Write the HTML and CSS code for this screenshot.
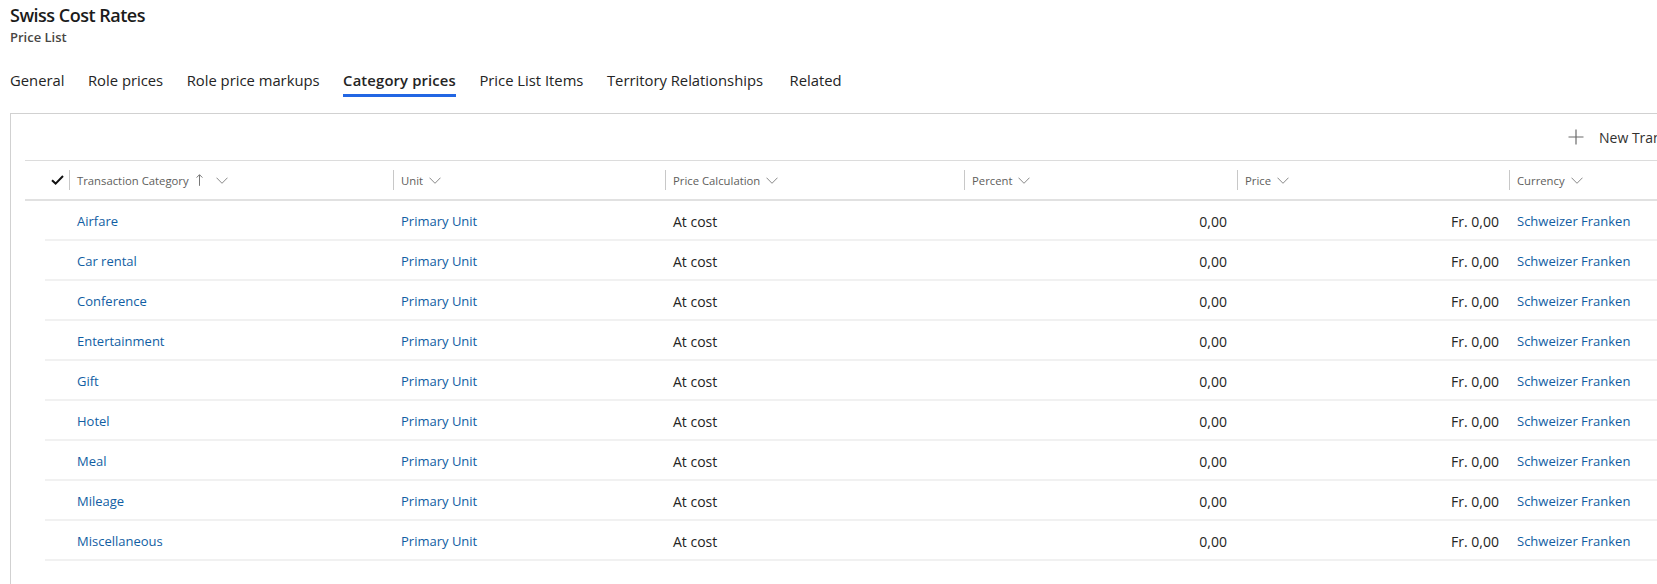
FILE: index.html
```html
<!DOCTYPE html>
<html lang="en">
<head>
    <meta charset="UTF-8">
    <title>Swiss Cost Rates - Price List</title>
    <link rel="stylesheet" href="styles.css">
</head>
<body>

    <!-- Cabecera del registro -->
    <div class="record-header">
        <div class="record-title">Swiss Cost Rates</div>
        <div class="record-type">Price List</div>
    </div>

    <div class="tabs">
        <div class="tab">General</div>
        <div class="tab">Role prices</div>
        <div class="tab">Role price markups</div>
        <div class="tab active">Category prices</div>
        <div class="tab">Price List Items</div>
        <div class="tab">Territory Relationships</div>
        <div class="tab last">Related</div>
    </div>

    <div class="card">
        <div class="commandbar">
            <div class="cmd-button">
                <svg class="cmd-icon" width="16" height="16" viewBox="0 0 16 16">
                    <path d="M8 0.5v15M0.5 8h15" stroke="#6b6b6b" stroke-width="1.2" fill="none"/>
                </svg>
                <span>New Transaction Category Price</span>
            </div>
        </div>

        <div class="grid">
            <div class="grid-head">
                <div class="hcell check-cell">
                    <svg width="13" height="10" viewBox="0 0 13 10">
                        <path d="M1 5.2l3.6 3.4 7.4-7.6" stroke="#111" stroke-width="2" fill="none"/>
                    </svg>
                </div>
                <div class="hcell"><div class="hcell-in">
                    <span>Transaction Category</span>
                    <svg class="sort-icon" width="7" height="12" viewBox="0 0 7 12">
                        <path d="M3.5 0.8v11M0.6 3.6l2.9-2.9 2.9 2.9" stroke="#777" stroke-width="1" fill="none"/>
                    </svg>
                    <svg class="chev chev-wide" width="12" height="7" viewBox="0 0 12 7"><path d="M0.5 0.7l5.5 5.6 5.5-5.6" stroke="#888" stroke-width="1" fill="none"/></svg>
                </div></div>
                <div class="hcell"><div class="hcell-in">
                    <span>Unit</span>
                    <svg class="chev" width="12" height="7" viewBox="0 0 12 7"><path d="M0.5 0.7l5.5 5.6 5.5-5.6" stroke="#888" stroke-width="1" fill="none"/></svg>
                </div></div>
                <div class="hcell"><div class="hcell-in">
                    <span>Price Calculation</span>
                    <svg class="chev" width="12" height="7" viewBox="0 0 12 7"><path d="M0.5 0.7l5.5 5.6 5.5-5.6" stroke="#888" stroke-width="1" fill="none"/></svg>
                </div></div>
                <div class="hcell"><div class="hcell-in">
                    <span>Percent</span>
                    <svg class="chev" width="12" height="7" viewBox="0 0 12 7"><path d="M0.5 0.7l5.5 5.6 5.5-5.6" stroke="#888" stroke-width="1" fill="none"/></svg>
                </div></div>
                <div class="hcell"><div class="hcell-in">
                    <span>Price</span>
                    <svg class="chev" width="12" height="7" viewBox="0 0 12 7"><path d="M0.5 0.7l5.5 5.6 5.5-5.6" stroke="#888" stroke-width="1" fill="none"/></svg>
                </div></div>
                <div class="hcell"><div class="hcell-in">
                    <span>Currency</span>
                    <svg class="chev" width="12" height="7" viewBox="0 0 12 7"><path d="M0.5 0.7l5.5 5.6 5.5-5.6" stroke="#888" stroke-width="1" fill="none"/></svg>
                </div></div>
            </div>

            <div class="grid-row">
                <div></div>
                <div class="cell link">Airfare</div>
                <div class="cell link">Primary Unit</div>
                <div class="cell">At cost</div>
                <div class="cell num">0,00</div>
                <div class="cell num">Fr. 0,00</div>
                <div class="cell link">Schweizer Franken</div>
            </div>
            <div class="grid-row">
                <div></div>
                <div class="cell link">Car rental</div>
                <div class="cell link">Primary Unit</div>
                <div class="cell">At cost</div>
                <div class="cell num">0,00</div>
                <div class="cell num">Fr. 0,00</div>
                <div class="cell link">Schweizer Franken</div>
            </div>
            <div class="grid-row">
                <div></div>
                <div class="cell link">Conference</div>
                <div class="cell link">Primary Unit</div>
                <div class="cell">At cost</div>
                <div class="cell num">0,00</div>
                <div class="cell num">Fr. 0,00</div>
                <div class="cell link">Schweizer Franken</div>
            </div>
            <div class="grid-row">
                <div></div>
                <div class="cell link">Entertainment</div>
                <div class="cell link">Primary Unit</div>
                <div class="cell">At cost</div>
                <div class="cell num">0,00</div>
                <div class="cell num">Fr. 0,00</div>
                <div class="cell link">Schweizer Franken</div>
            </div>
            <div class="grid-row">
                <div></div>
                <div class="cell link">Gift</div>
                <div class="cell link">Primary Unit</div>
                <div class="cell">At cost</div>
                <div class="cell num">0,00</div>
                <div class="cell num">Fr. 0,00</div>
                <div class="cell link">Schweizer Franken</div>
            </div>
            <div class="grid-row">
                <div></div>
                <div class="cell link">Hotel</div>
                <div class="cell link">Primary Unit</div>
                <div class="cell">At cost</div>
                <div class="cell num">0,00</div>
                <div class="cell num">Fr. 0,00</div>
                <div class="cell link">Schweizer Franken</div>
            </div>
            <div class="grid-row">
                <div></div>
                <div class="cell link">Meal</div>
                <div class="cell link">Primary Unit</div>
                <div class="cell">At cost</div>
                <div class="cell num">0,00</div>
                <div class="cell num">Fr. 0,00</div>
                <div class="cell link">Schweizer Franken</div>
            </div>
            <div class="grid-row">
                <div></div>
                <div class="cell link">Mileage</div>
                <div class="cell link">Primary Unit</div>
                <div class="cell">At cost</div>
                <div class="cell num">0,00</div>
                <div class="cell num">Fr. 0,00</div>
                <div class="cell link">Schweizer Franken</div>
            </div>
            <div class="grid-row">
                <div></div>
                <div class="cell link">Miscellaneous</div>
                <div class="cell link">Primary Unit</div>
                <div class="cell">At cost</div>
                <div class="cell num">0,00</div>
                <div class="cell num">Fr. 0,00</div>
                <div class="cell link">Schweizer Franken</div>
            </div>
        </div>
    </div>

</body>
</html>
```

FILE: styles.css
```css
html, body {
    overflow: hidden;
}
body {
    margin: 0;
    font-family: "Open Sans", Arial, sans-serif;
    color: #242424;
    background-color: white;
}
/* Cabecera */
.record-header {
    padding: 2px 0 0 10px;
}
.record-title {
    font-size: 18px;
    font-weight: 600;
    letter-spacing: -0.5px;
    line-height: 26px;
    color: #1b1b1b;
}
.record-type {
    font-size: 13px;
    font-weight: 600;
    line-height: 18px;
    color: #484644;
}
/* Pestañas */
.tabs {
    display: flex;
    gap: 23.5px;
    margin: 24px 0 0 10px;
}
.tab {
    font-size: 14.8px;
    line-height: 20px;
    padding-bottom: 4px;
    border-bottom: 3px solid transparent;
    white-space: nowrap;
}
.tab.active {
    font-weight: 600;
    letter-spacing: 0.15px;
    border-bottom-color: #2266e3;
}
.tab.last {
    margin-left: 3px;
}
/* Tarjeta con la tabla */
.card {
    margin: 16px 0 0 10px;
    border: 1px solid #d1d1d1;
    border-right: none;
    width: 1800px;
    padding: 0 0 60px 14px;
}
.commandbar {
    height: 46px;
    display: flex;
    align-items: center;
    padding-left: 1543px;
}
.cmd-button {
    display: flex;
    align-items: center;
    gap: 15px;
    font-size: 14px;
    color: #323130;
    white-space: nowrap;
}
.grid-head,
.grid-row {
    display: grid;
    grid-template-columns: 44px 324px 272px 299px 273px 272px 240px;
}
.grid-head {
    height: 38px;
    border-top: 1px solid #dcdcdc;
    border-bottom: 2px solid #e1e1e1;
}
.hcell {
    display: flex;
    align-items: center;
}
.check-cell {
    justify-content: flex-end;
    padding-right: 5px;
}
.hcell-in {
    display: flex;
    align-items: center;
    height: 20px;
    border-left: 1px solid #c8c8c8;
    padding-left: 7px;
    font-size: 11.3px;
    color: #605e5c;
    white-space: nowrap;
}
.chev {
    margin-left: 6px;
}
.sort-icon {
    margin-left: 7px;
}
.chev-wide {
    margin-left: 13px;
}
.grid-row {
    margin-left: 20px;
    grid-template-columns: 24px 324px 272px 299px 273px 272px 240px;
    height: 38px;
    border-bottom: 2px solid #f1f1f1;
}
.cell {
    display: flex;
    align-items: center;
    padding: 2px 0 0 8px;
    font-size: 14px;
    white-space: nowrap;
}
.cell.link {
    font-size: 13px;
    color: #115ea3;
}
.cell.num {
    justify-content: flex-end;
    padding: 2px 10px 0 0;
}
```
